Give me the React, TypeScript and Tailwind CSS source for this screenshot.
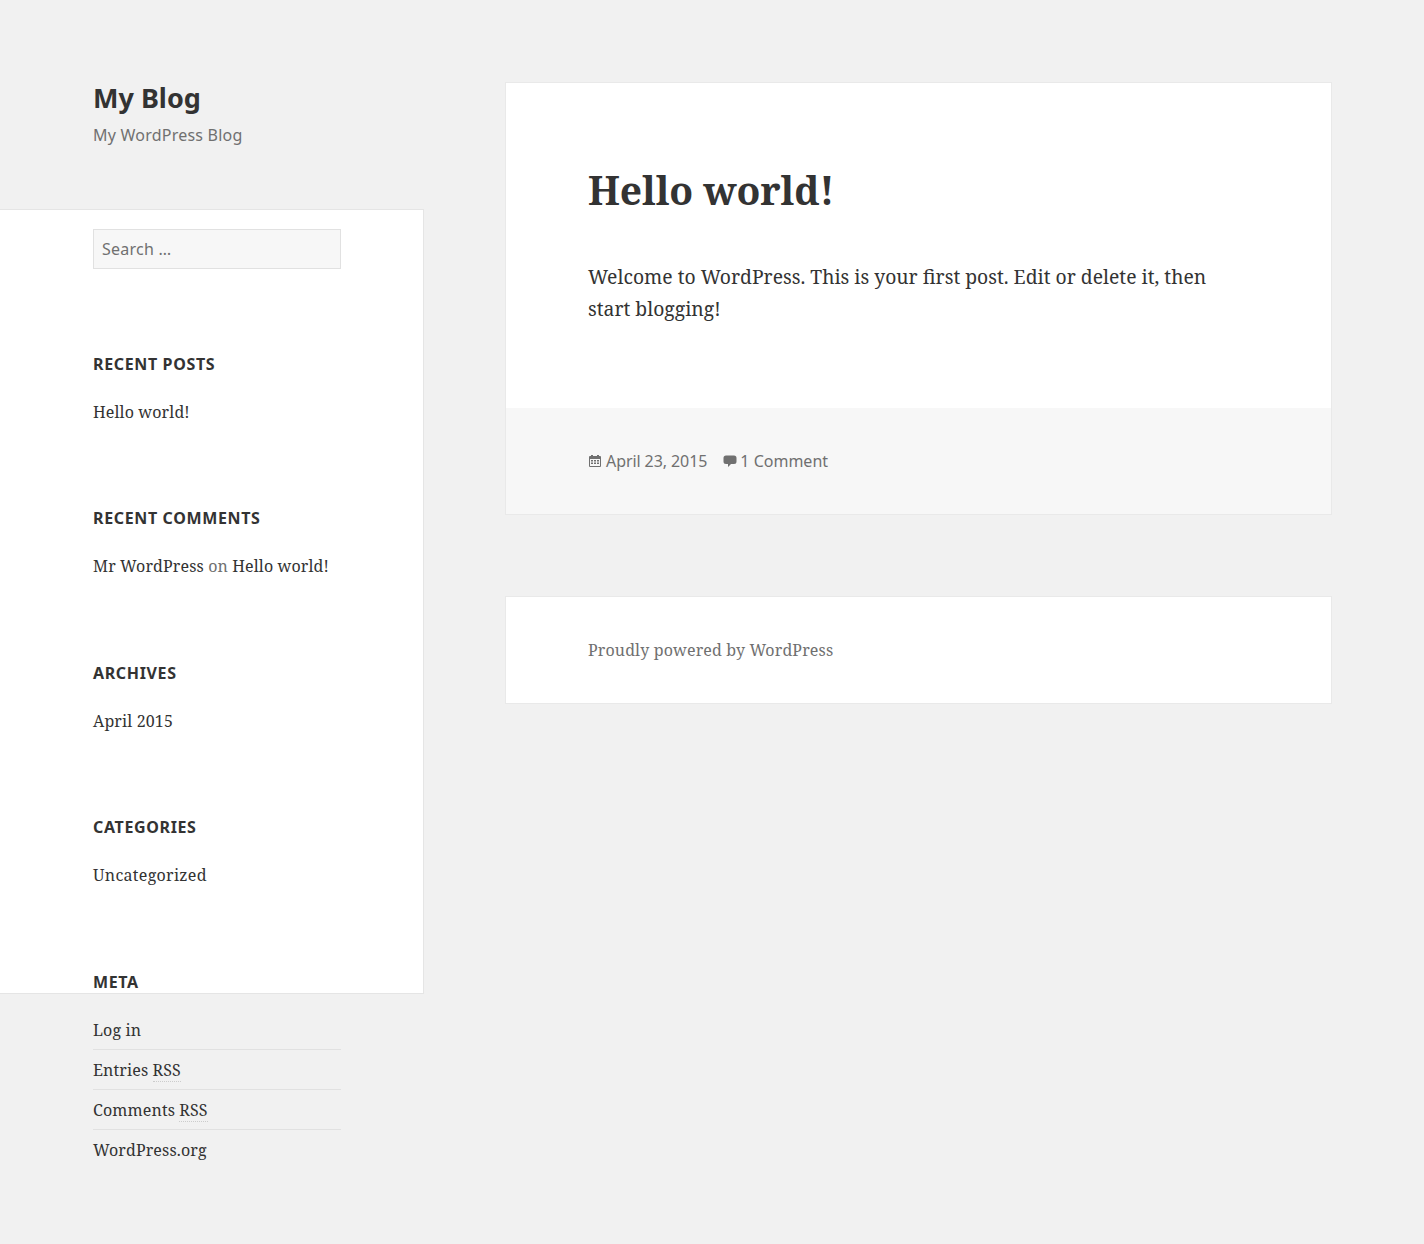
const serif = "font-['Noto_Serif','Liberation_Serif',serif]";

function Widget({ title, children, mt }: { title: string; children: React.ReactNode; mt: string }) {
  return (
    <section className={mt}>
      <h2 className="text-[16px] leading-[24px] font-bold uppercase tracking-[0.64px] text-[#333]">{title}</h2>
      <div className={`mt-[24px] text-[16px] leading-[24px] tracking-[0.13px] text-[#333] ${serif}`}>{children}</div>
    </section>
  );
}

function Rss() {
  return <abbr className="border-b border-dotted border-[#ccc] no-underline">RSS</abbr>;
}

function CalendarIcon() {
  return (
    <svg width="14" height="14" viewBox="0 0 14 14" className="mr-[4px] shrink-0 text-[#707070]">
      <path fill="currentColor" d="M2 2h1V1h2v1h4V1h2v1h1a1 1 0 0 1 1 1v9a1 1 0 0 1-1 1H2a1 1 0 0 1-1-1V3a1 1 0 0 1 1-1Zm0 3v7h10V5H2Z" />
      <path fill="currentColor" d="M3 6h2v1.5H3zM6 6h2v1.5H6zM9 6h2v1.5H9zM3 8.5h2V10H3zM6 8.5h2V10H6zM9 8.5h2V10H9z" />
    </svg>
  );
}

function CommentIcon() {
  return (
    <svg width="14" height="14" viewBox="0 0 14 14" className="mr-[3px] shrink-0 text-[#707070]">
      <path fill="currentColor" d="M3 1.500h8A2.500 2.500 0 0 1 13.500 4v3.500A2.500 2.500 0 0 1 11 10H8l-3 3v-3H3A2.500 2.500 0 0 1 .5 7.500V4A2.500 2.500 0 0 1 3 1.500Z" />
    </svg>
  );
}

export default function App() {
  return (
    <div className="relative h-[1244px] overflow-hidden bg-[#f1f1f1] font-['Noto_Sans',sans-serif] text-[#333]">
      {/* sidebar white panel */}
      <div className="absolute left-0 top-[209px] h-[785px] w-[424px] border border-l-0 border-[#e5e5e5] bg-white" />
      <div className="relative flex">
        <aside className="ml-[93px] w-[248px] pt-[81px]">
          <h1 className="text-[27px] leading-[33px] font-bold text-[#333]">My Blog</h1>
          <p className="mt-[5px] text-[16px] leading-[32px] tracking-[0.22px] text-[#707070]">My WordPress Blog</p>
          <div className="mt-[78px] flex h-[40px] items-center border border-[#e1e1e1] bg-[#f7f7f7] px-[8px] text-[16px] tracking-[0.24px] text-[#707070]">Search …</div>
          <Widget title="Recent Posts" mt="mt-[83px]"><p>Hello world!</p></Widget>
          <Widget title="Recent Comments" mt="mt-[82px]">
            <p>Mr WordPress <span className="text-[#707070]">on</span> Hello world!</p>
          </Widget>
          <Widget title="Archives" mt="mt-[83px]"><p>April 2015</p></Widget>
          <Widget title="Categories" mt="mt-[82px]"><p className="tracking-[0.3px]">Uncategorized</p></Widget>
          <Widget title="Meta" mt="mt-[83px]">
            <ul>
              <li className="border-b border-[#e1e1e1] pb-[7px]">Log in</li>
              <li className="border-b border-[#e1e1e1] pt-[8px] pb-[7px]">Entries <Rss /></li>
              <li className="border-b border-[#e1e1e1] pt-[8px] pb-[7px]">Comments <Rss /></li>
              <li className="pt-[8px]">WordPress.org</li>
            </ul>
          </Widget>
        </aside>
        <main className="ml-[164px] w-[827px] pt-[82px]">
          <article className="border border-[#e9e9e9] bg-white">
            <div className="h-[325px] px-[82px] pt-[81px]">
              <h2 className={`text-[39px] leading-[52px] font-bold tracking-[-0.1px] text-[#333] ${serif}`}>Hello world!</h2>
              <p className={`mt-[45px] text-[19.33px] leading-[32px] text-[#333] ${serif}`}>
                Welcome to WordPress. This is your first post. Edit or delete it, then start blogging!
              </p>
            </div>
            <footer className="flex h-[106px] items-center bg-[#f7f7f7] px-[82px] text-[16px] text-[#707070]">
              <CalendarIcon />
              <span className="tracking-[-0.08px]">April 23, 2015</span>
              <span className="ml-[16px]"><CommentIcon /></span>
              <span>1 Comment</span>
            </footer>
          </article>
          <div className={`mt-[81px] flex h-[108px] items-center border border-[#e9e9e9] bg-white px-[82px] text-[16px] tracking-[0.14px] text-[#707070] ${serif}`}>
            Proudly powered by WordPress
          </div>
        </main>
      </div>
    </div>
  );
}
